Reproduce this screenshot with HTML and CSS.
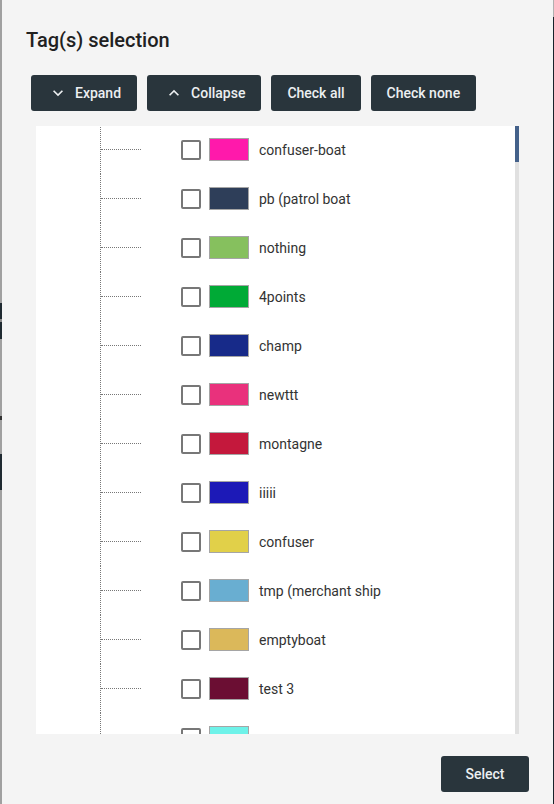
FILE: index.html
```html
<!DOCTYPE html>
<html>
<head>
<meta charset="utf-8">
<title>Tag(s) selection</title>
<link rel="stylesheet" href="styles.css">
</head>
<body>
<div class="page">
  <div class="backdrop-left"></div>
  <div class="dialog">
    <h2 class="title">Tag(s) selection</h2>
    <div class="toolbar">
      <button class="btn btn-icon"><svg class="ico" viewBox="0 0 24 24"><path d="M16.59 8.59L12 13.17 7.41 8.59 6 10l6 6 6-6z"/></svg><span>Expand</span></button>
      <button class="btn btn-icon"><svg class="ico" viewBox="0 0 24 24"><path d="M7.41 15.41L12 10.83l4.59 4.58L18 14l-6-6-6 6z"/></svg><span>Collapse</span></button>
      <button class="btn">Check all</button>
      <button class="btn">Check none</button>
    </div>
    <div class="panel">
      <div class="tree">
        <div class="row"><div class="conn"><div class="hline"></div></div><span class="cb"></span><span class="sw" style="background:#ff19ab"></span><span class="lbl">confuser-boat</span></div>
        <div class="row"><div class="conn"><div class="hline"></div></div><span class="cb"></span><span class="sw" style="background:#2e3e59"></span><span class="lbl">pb (patrol boat</span></div>
        <div class="row"><div class="conn"><div class="hline"></div></div><span class="cb"></span><span class="sw" style="background:#86c05e"></span><span class="lbl">nothing</span></div>
        <div class="row"><div class="conn"><div class="hline"></div></div><span class="cb"></span><span class="sw" style="background:#00aa36"></span><span class="lbl">4points</span></div>
        <div class="row"><div class="conn"><div class="hline"></div></div><span class="cb"></span><span class="sw" style="background:#172a89"></span><span class="lbl">champ</span></div>
        <div class="row"><div class="conn"><div class="hline"></div></div><span class="cb"></span><span class="sw" style="background:#e9317c"></span><span class="lbl">newttt</span></div>
        <div class="row"><div class="conn"><div class="hline"></div></div><span class="cb"></span><span class="sw" style="background:#c4183c"></span><span class="lbl">montagne</span></div>
        <div class="row"><div class="conn"><div class="hline"></div></div><span class="cb"></span><span class="sw" style="background:#1c19b7"></span><span class="lbl">iiiii</span></div>
        <div class="row"><div class="conn"><div class="hline"></div></div><span class="cb"></span><span class="sw" style="background:#e1d049"></span><span class="lbl">confuser</span></div>
        <div class="row"><div class="conn"><div class="hline"></div></div><span class="cb"></span><span class="sw" style="background:#69aed1"></span><span class="lbl">tmp (merchant ship</span></div>
        <div class="row"><div class="conn"><div class="hline"></div></div><span class="cb"></span><span class="sw" style="background:#dbb85a"></span><span class="lbl">emptyboat</span></div>
        <div class="row"><div class="conn"><div class="hline"></div></div><span class="cb"></span><span class="sw" style="background:#6b0e33"></span><span class="lbl">test 3</span></div>
        <div class="row"><div class="conn"><div class="hline"></div></div><span class="cb"></span><span class="sw" style="background:#6ef2e9"></span><span class="lbl"></span></div>
      </div>
      <div class="scrollbar"><div class="thumb"></div></div>
    </div>
    <div class="actions">
      <button class="btn btn-select">Select</button>
    </div>
  </div>
  <div class="backdrop-right"></div>
</div>
</body>
</html>
```
FILE: styles.css
```css
* { box-sizing: border-box; }
html, body { margin: 0; padding: 0; }
body {
  width: 554px;
  height: 804px;
  overflow: hidden;
  background: #f4f4f4;
  font-family: Roboto, "Liberation Sans", sans-serif;
}
.page {
  display: flex;
  width: 554px;
  height: 804px;
}
.backdrop-left {
  width: 2px;
  flex: none;
  background: linear-gradient(to bottom,
    #a0a0a0 0, #a0a0a0 303px,
    #1f2a31 303px, #1f2a31 319px,
    #8a8a8a 319px, #8a8a8a 322px,
    #1f2a31 322px, #1f2a31 339px,
    #a0a0a0 339px, #a0a0a0 416px,
    #333 416px, #333 420px,
    #a0a0a0 420px, #a0a0a0 454px,
    #1f2a31 454px, #1f2a31 490px,
    #a0a0a0 490px, #a0a0a0 100%);
}
.backdrop-right {
  width: 1px;
  flex: none;
  background: linear-gradient(to bottom, #b0b0b0 0, #b0b0b0 17px, #17232b 17px, #17232b 100%);
}
.dialog {
  flex: 1;
  display: flex;
  flex-direction: column;
  background: #f4f4f4;
}
.title {
  margin: 28px 0 0 24px;
  font-size: 20px;
  line-height: 24px;
  font-weight: 500;
  color: #212121;
}
.toolbar {
  display: flex;
  gap: 10px;
  margin: 23px 0 0 29px;
}
.btn {
  height: 36px;
  padding: 0 16px;
  border: none;
  border-radius: 3px;
  background: #29353c;
  color: #eceff1;
  font-family: Roboto, "Liberation Sans", sans-serif;
  font-size: 14px;
  font-weight: 500;
  display: inline-flex;
  align-items: center;
  justify-content: center;
}
.btn-icon {
  padding-left: 17px;
  gap: 7px;
}
.ico {
  width: 20px;
  height: 20px;
  fill: #eceff1;
}
.panel {
  display: flex;
  margin: 15px 0 0 34px;
  width: 483px;
  height: 608px;
}
.tree {
  flex: 1;
  background: #fff;
  overflow: hidden;
}
.rows-offset { margin-top: -1px; }
.row {
  display: flex;
  align-items: center;
  height: 49px;
  padding-left: 64px;
}
.row:first-child { margin-top: -1px; }
.conn {
  align-self: stretch;
  width: 41px;
  border-left: 1px dotted #777;
  display: flex;
  align-items: center;
}
.hline {
  width: 40px;
  border-top: 1px dotted #777;
}
.cb {
  width: 20px;
  height: 20px;
  margin-left: 40px;
  border: 2px solid #777;
  border-radius: 2px;
  background: #fff;
}
.sw {
  width: 40px;
  height: 23px;
  margin-left: 8px;
  border: 1px solid #a5a5a5;
}
.lbl {
  margin-left: 10px;
  font-size: 14px;
  color: #333;
}
.scrollbar {
  width: 4px;
  background: #e0e0e0;
}
.thumb {
  height: 36px;
  background: #44618a;
}
.actions {
  display: flex;
  justify-content: flex-end;
  margin: 22px 24px 0 0;
}
.btn-select {
  width: 88px;
}
```
